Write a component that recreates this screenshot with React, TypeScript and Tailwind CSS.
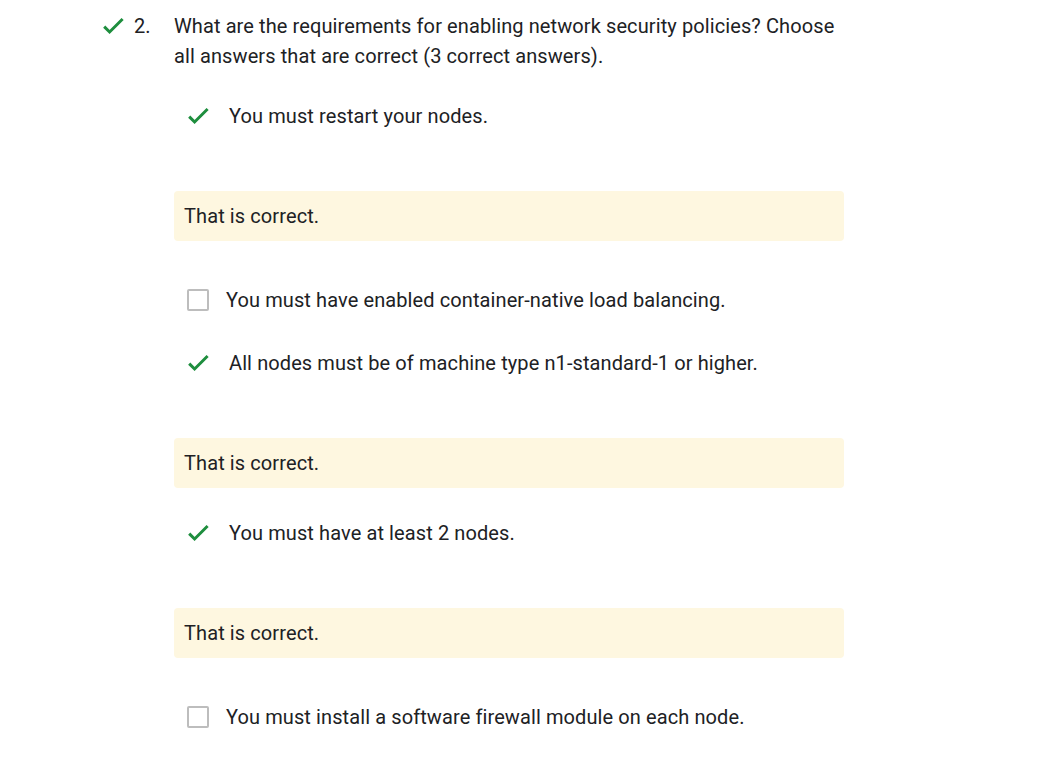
const GREEN = 'text-[#1e8e3e]'

function Check({ className = '' }: { className?: string }) {
  return (
    <svg viewBox="0 0 24 24" width={24} height={24} className={`${GREEN} shrink-0 ${className}`} fill="none">
      <path d="M4.2 12.6 9.6 18 22.6 5" stroke="currentColor" strokeWidth={3} strokeLinecap="butt" strokeLinejoin="miter" />
    </svg>
  )
}

function Box() {
  return <span className="block w-[22px] h-[22px] shrink-0 border-2 border-[#bdbdbd] rounded-[2px] bg-white" />
}

type Item = { text: string; checked: boolean; mt: string; feedback?: boolean }

const items: Item[] = [
  { text: 'You must restart your nodes.', checked: true, mt: 'mt-[30px]', feedback: true },
  { text: 'You must have enabled container-native load balancing.', checked: false, mt: 'mt-[44px]' },
  { text: 'All nodes must be of machine type n1-standard-1 or higher.', checked: true, mt: 'mt-[33px]', feedback: true },
  { text: 'You must have at least 2 nodes.', checked: true, mt: 'mt-[30px]', feedback: true },
  { text: 'You must install a software firewall module on each node.', checked: false, mt: 'mt-[44px]' },
]

export default function App() {
  return (
    <div
      className="min-h-screen bg-white text-[#202124] text-[20px] leading-[30px] tracking-[0.1px] pt-[11px] pl-[100px]"
      style={{ fontFamily: 'Roboto, "Noto Sans", sans-serif' }}
    >
      <div className="flex items-start">
        <Check className="mt-[3px]" />
        <span className="ml-[10px] w-[40px]">2.</span>
        <p className="w-[670px]">
          What are the requirements for enabling network security policies? Choose all answers that are correct (3 correct answers).
        </p>
      </div>
      <div className="ml-[74px] w-[670px]">
        {items.map((it) => (
          <div key={it.text} className={it.mt}>
            <div className="flex items-center h-[30px]">
              {it.checked ? (
                <>
                  <Check className="ml-[11px]" />
                  <span className="ml-[20px]">{it.text}</span>
                </>
              ) : (
                <>
                  <span className="ml-[13px]">
                    <Box />
                  </span>
                  <span className="ml-[17px]">{it.text}</span>
                </>
              )}
            </div>
            {it.feedback && (
              <div className="mt-[60px] h-[50px] flex items-center px-[10px] bg-[#fef7e0] rounded-[4px]">
                That is correct.
              </div>
            )}
          </div>
        ))}
      </div>
    </div>
  )
}
